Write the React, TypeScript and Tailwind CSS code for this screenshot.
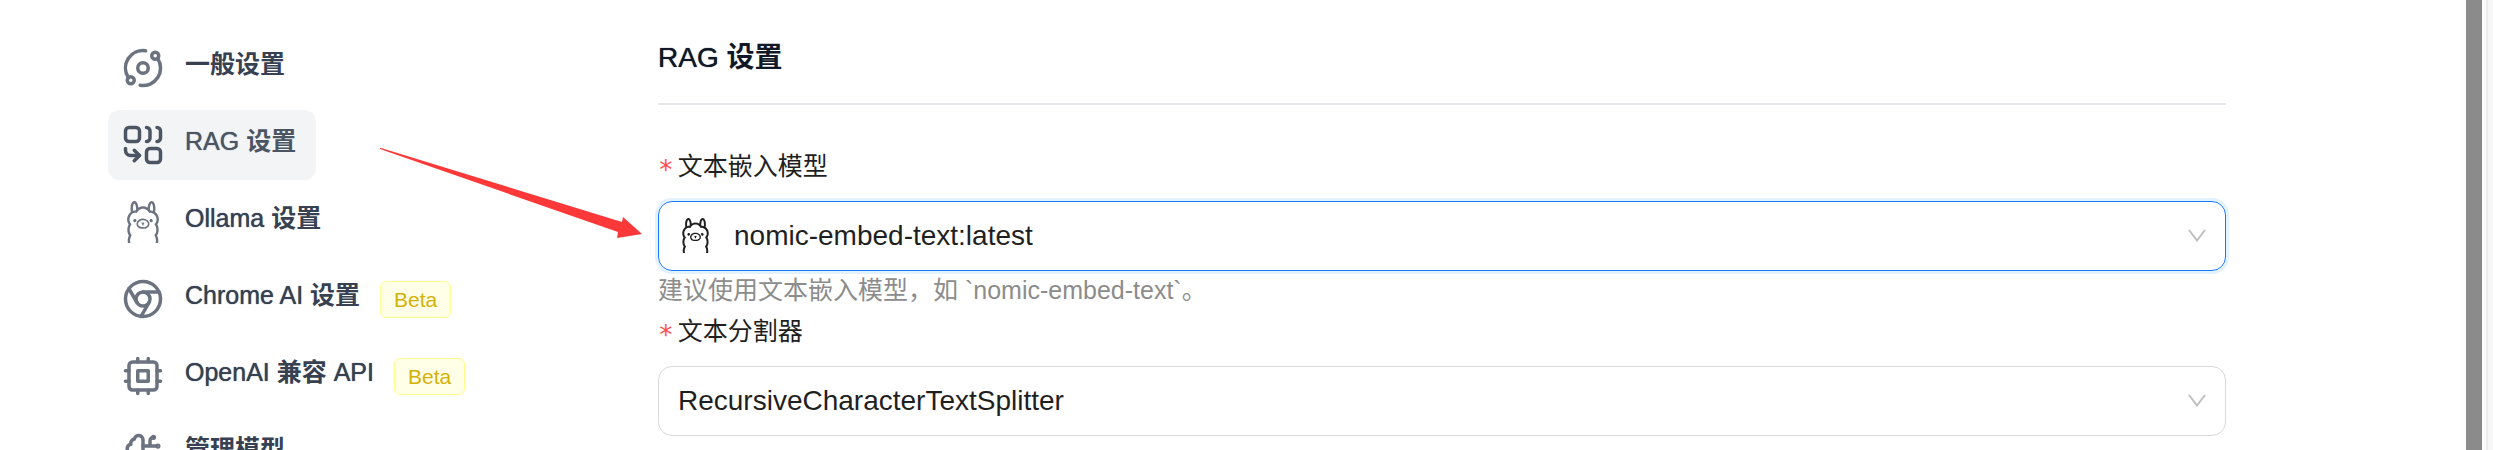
import type { ReactNode } from "react";
import { useState } from "react";
import { SiOllama } from "react-icons/si";

const Icon = ({ children }: { children: ReactNode }) => (
  <svg
    viewBox="0 0 24 24"
    fill="none"
    stroke="currentColor"
    strokeWidth={2}
    strokeLinecap="round"
    strokeLinejoin="round"
    className="size-[42px] shrink-0"
    aria-hidden="true"
  >
    {children}
  </svg>
);

const OrbitIcon = () => (
  <Icon>
    <circle cx="12" cy="12" r="3" />
    <circle cx="19" cy="5" r="2" />
    <circle cx="5" cy="19" r="2" />
    <path d="M10.4 21.9a10 10 0 0 0 9.941-15.416" />
    <path d="M13.5 2.1a10 10 0 0 0-9.841 15.416" />
  </Icon>
);

const CombineIcon = () => (
  <Icon>
    <rect width="8" height="8" x="2" y="2" rx="2" />
    <path d="M14 2c1.1 0 2 .9 2 2v4c0 1.1-.9 2-2 2" />
    <path d="M20 2c1.1 0 2 .9 2 2v4c0 1.1-.9 2-2 2" />
    <path d="M10 18H5c-1.7 0-3-1.3-3-3v-1" />
    <polyline points="7 21 10 18 7 15" />
    <rect width="8" height="8" x="14" y="14" rx="2" />
  </Icon>
);

const ChromeIcon = () => (
  <Icon>
    <circle cx="12" cy="12" r="10" />
    <circle cx="12" cy="12" r="4" />
    <line x1="21.17" x2="12" y1="8" y2="8" />
    <line x1="3.95" x2="8.54" y1="6.06" y2="14" />
    <line x1="10.88" x2="15.46" y1="21.94" y2="14" />
  </Icon>
);

const CpuIcon = () => (
  <Icon>
    <rect x="4" y="4" width="16" height="16" rx="2" />
    <rect x="9" y="9" width="6" height="6" />
    <path d="M15 2v2M15 20v2M2 15h2M2 9h2M20 15h2M20 9h2M9 2v2M9 20v2" />
  </Icon>
);

const BrainCircuitIcon = () => (
  <Icon>
    <path d="M12 4.5a2.5 2.5 0 0 0-4.96-.46 2.5 2.5 0 0 0-1.98 3 2.5 2.5 0 0 0-1.32 4.24 3 3 0 0 0 .34 5.58 2.5 2.5 0 0 0 2.96 3.08 2.5 2.5 0 0 0 4.91.05L12 20V4.5Z" />
    <path d="M16 8V5c0-1.1.9-2 2-2M12 13h4M12 18h6a2 2 0 0 1 2 2v1M12 8h8" />
    <circle cx="20.5" cy="8" r=".5" />
    <circle cx="16" cy="13" r=".5" />
    <circle cx="20" cy="21" r=".5" />
    <circle cx="18" cy="3" r=".5" />
  </Icon>
);

const ChevronIcon = () => (
  <svg
    viewBox="0 0 18 13"
    fill="none"
    stroke="#bfbfbf"
    strokeWidth={2}
    className="pointer-events-none absolute right-5 top-7 h-[13px] w-[18px]"
    aria-hidden="true"
  >
    <path d="M1 1l8 10.500l8-10.500" />
  </svg>
);

const Bold = ({ children }: { children: ReactNode }) => (
  <b className="[text-shadow:none]">{children}</b>
);

const menu = [
  { icon: <OrbitIcon />, label: <Bold>一般设置</Bold> },
  { icon: <CombineIcon />, label: <>RAG <Bold>设置</Bold></>, active: true },
  {
    icon: <SiOllama className="size-[42px] shrink-0" aria-hidden="true" />,
    label: <>Ollama <Bold>设置</Bold></>,
  },
  { icon: <ChromeIcon />, label: <>Chrome AI <Bold>设置</Bold></>, beta: true },
  { icon: <CpuIcon />, label: <>OpenAI <Bold>兼容</Bold> API</>, beta: true },
  { icon: <BrainCircuitIcon />, label: <Bold>管理模型</Bold> },
];

const Sidebar = () => (
  <nav className="w-[658px] shrink-0 pl-[108px]">
    <ul className="flex flex-col gap-[7px]">
      {menu.map((item, i) => (
        <li key={i} className="flex items-center">
          <a
            href="#"
            className={
              item.active
                ? "flex h-[70px] items-center gap-[21px] rounded-xl bg-gray-100 px-3.5 pr-5 text-[#4b5563]"
                : "flex h-[70px] items-center gap-[21px] rounded-xl px-3.5 pr-5 text-[#6b7280]"
            }
          >
            {item.icon}
            <span
              className={
                item.active
                  ? "whitespace-nowrap pb-2 text-[25px] leading-9 font-medium text-[#4b5563] [text-shadow:0_0_1px_currentColor]"
                  : "whitespace-nowrap pb-2 text-[25px] leading-9 font-medium text-[#374151] [text-shadow:0_0_1px_currentColor]"
              }
            >
              {item.label}
            </span>
          </a>
          {item.beta && (
            <span className="rounded-md border border-[#fffb8f] bg-[#feffe6] px-[13px] text-[21px] leading-[35px] text-[#d4b106]">
              Beta
            </span>
          )}
        </li>
      ))}
    </ul>
  </nav>
);

const FieldLabel = ({ id, children }: { id: string; children: ReactNode }) => (
  <label
    htmlFor={id}
    className="flex items-center gap-1 text-[25px] leading-[38px] text-[#1f1f1f]"
  >
    <span className="pt-2 font-['DejaVu_Sans_Mono',monospace] text-[26px] leading-[30px] text-[#ff4d4f]">
      *
    </span>
    {children}
  </label>
);

export default function App() {
  const [model, setModel] = useState("nomic-embed-text:latest");
  const [splitter, setSplitter] = useState("RecursiveCharacterTextSplitter");

  return (
    <div className="relative flex h-screen overflow-hidden bg-white font-['Liberation_Sans','Noto_Sans_CJK_SC',sans-serif]">
      <div className="flex min-w-0 flex-1 pt-[33px] pr-[235px]">
        <Sidebar />

        <main className="min-w-0 flex-1">
          <h2 className="border-b-2 border-gray-200 pt-1 pb-6 text-[28px] leading-[42px] font-medium text-[#111827] [text-shadow:0_0_1px_currentColor]">
            RAG <Bold>设置</Bold>
          </h2>

          <form className="pt-[42px]">
            <FieldLabel id="model">文本嵌入模型</FieldLabel>
            <div className="relative mt-4">
              <SiOllama
                className="pointer-events-none absolute left-5 top-[17px] size-[35px] text-[#1f1f1f]"
                aria-hidden="true"
              />
              <select
                id="model"
                value={model}
                onChange={(e) => setModel(e.target.value)}
                className="block h-[70px] w-full appearance-none rounded-[14px] border border-[#1677ff] bg-transparent pr-14 pl-[75px] text-[28px] text-[#1f1f1f] ring-3 ring-[#e3f2ff] outline-none"
              >
                <option>nomic-embed-text:latest</option>
              </select>
              <ChevronIcon />
            </div>
            <p className="text-[25px] leading-[38px] text-[#8c8c8c]">
              建议使用文本嵌入模型，如 `nomic-embed-text`。
            </p>

            <div className="pt-[3px]">
              <FieldLabel id="splitter">文本分割器</FieldLabel>
            </div>
            <div className="relative mt-4">
              <select
                id="splitter"
                value={splitter}
                onChange={(e) => setSplitter(e.target.value)}
                className="block h-[70px] w-full appearance-none rounded-[14px] border border-[#d9d9d9] bg-transparent pr-14 pl-[19px] text-[28px] text-[#1f1f1f] outline-none"
              >
                <option>RecursiveCharacterTextSplitter</option>
              </select>
              <ChevronIcon />
            </div>
          </form>
        </main>
      </div>

      <div className="flex w-8 shrink-0 bg-[#fcfcfc]">
        <div className="ml-[5px] w-4 bg-[#8b8b8b]" />
        <div className="ml-1 w-[7px] border-l-2 border-[#ededed] bg-[#f7f7f7]" />
      </div>

      {/* pointer from the menu entry to the model field */}
      <svg
        viewBox="0 0 264 92"
        className="pointer-events-none absolute left-[379px] top-[147px] h-[92px] w-[264px]"
        aria-hidden="true"
      >
        <path
          fill="#fd3838"
          d="M1 1L2 1L243 75L244 70L263 87L238 91L239 85L1 2Z"
        />
      </svg>
    </div>
  );
}
